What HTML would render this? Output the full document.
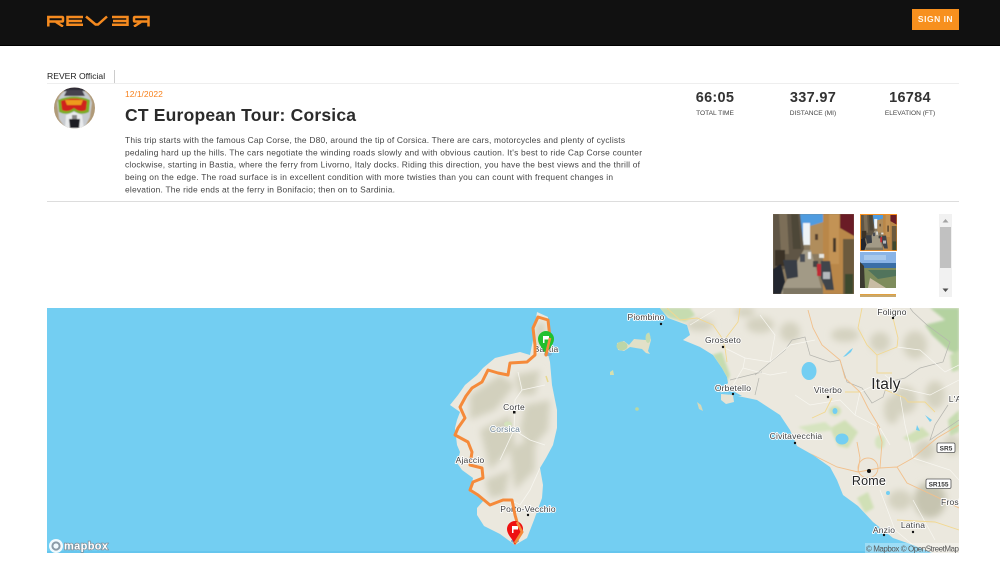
<!DOCTYPE html>
<html lang="en"><head><meta charset="utf-8"><title>CT European Tour: Corsica</title>
<style>
html,body{margin:0;padding:0;background:#fff;width:1000px;height:569px;overflow:hidden}
body{position:relative;font-family:"Liberation Sans",sans-serif;color:#333}
.a{position:absolute}
#hdr{left:0;top:0;width:1000px;height:45px;background:#111;border-bottom:1px solid #000}
#btn{left:912px;top:9px;width:47px;height:21px;background:#f7901e;color:#fff6ea;font-size:8.500px;font-weight:bold;line-height:21px;text-align:center;letter-spacing:.5px}
.num{font-weight:bold;font-size:14.500px;color:#333;text-align:center;width:100px;top:90px;line-height:17px;letter-spacing:.3px}
.lab{font-size:6.600px;color:#444;text-align:center;width:100px;top:109px;line-height:9px}
svg{display:block}
</style></head><body>
<div class="a" id="hdr"></div>
<svg class="a" style="left:47px;top:15px" width="103" height="12" viewBox="0 0 103 12" fill="none" stroke="#f58a1f" stroke-width="2.500">
<path d="M1.300 11.500V2H15Q16 2 16 3V5.500Q16 6.500 15 6.500H1.300M9 7L16 11.500"/>
<path d="M36 2H20.500V9.800H36M21 6H35"/>
<path d="M39 1.500L48.500 9.500H51L60 1.500"/>
<path d="M65 2H80.500V9.800H65M66 6H80"/>
<path d="M101.500 11.500V2H88Q87 2 87 3V5.500Q87 6.500 88 6.500H101.500M94 7L87 11.500"/>
</svg>
<div class="a" id="btn">SIGN IN</div>

<div class="a" style="left:47px;top:71px;font-size:8.600px;line-height:11px;color:#222">REVER Official</div>
<div class="a" style="left:114px;top:70px;width:1px;height:13px;background:#ccc"></div>
<div class="a" style="left:47px;top:83px;width:912px;height:1px;background:#eee"></div>

<svg class="a" style="left:54px;top:87px" width="42" height="42" viewBox="0 0 42 42">
<defs><clipPath id="av"><circle cx="20.500" cy="21" r="20.500"/></clipPath><filter id="b1"><feGaussianBlur stdDeviation=".4"/></filter></defs>
<g clip-path="url(#av)"><rect width="42" height="42" fill="#b09a78"/>
<g filter="url(#b1)"><path d="M10 0H31V6H10z" fill="#2e2c36"/><path d="M3 16Q6 5 12 4L30 4Q36 7 38 16L36 30L30 42H12L5 32z" fill="#c7cbd0"/><path d="M13 3H28L31 9H10z" fill="#45434e"/>
<path d="M4 13Q20 6 36 13L35 25Q27 29 20 24Q13 29 5 25z" fill="#7dad26"/><path d="M7 14Q20 9 33 14L32 23Q26 26 20 21Q14 26 8 23z" fill="#d0231c"/><path d="M11 13H29L27 18H13z" fill="#ee9a1c"/>
<path d="M12 28L20 25L28 28L30 42H11z" fill="#e8eaec"/><path d="M15 32H26L25 41H16z" fill="#1b1b20"/><rect x="18" y="28" width="5" height="4" fill="#888"/></g></g>
</svg>

<div class="a" style="left:125px;top:89px;font-size:8.500px;line-height:11px;color:#f7821e">12/1/2022</div>
<svg class="a" style="left:0;top:100px" width="700" height="30"><text x="125" y="21" font-family="'Liberation Sans',sans-serif" font-size="17.500" font-weight="bold" fill="#2b2b2b" textLength="231" lengthAdjust="spacing">CT European Tour: Corsica</text></svg>

<div class="a num" style="left:665px">66:05</div>
<div class="a num" style="left:763px">337.97</div>
<div class="a num" style="left:860px">16784</div>
<div class="a lab" style="left:665px">TOTAL TIME</div>
<div class="a lab" style="left:763px">DISTANCE (MI)</div>
<div class="a lab" style="left:860px">ELEVATION (FT)</div>

<svg class="a" style="left:0;top:130px" width="700" height="70" font-family="'Liberation Sans',sans-serif" font-size="8.400" fill="#444">
<text x="125" y="13" textLength="500" lengthAdjust="spacing">This trip starts with the famous Cap Corse, the D80, around the tip of Corsica. There are cars, motorcycles and plenty of cyclists</text>
<text x="125" y="25.300" textLength="517" lengthAdjust="spacing">pedaling hard up the hills. The cars negotiate the winding roads slowly and with obvious caution. It's best to ride Cap Corse counter</text>
<text x="125" y="37.600" textLength="515" lengthAdjust="spacing">clockwise, starting in Bastia, where the ferry from Livorno, Italy docks. Riding this direction, you have the best views and the thrill of</text>
<text x="125" y="50" textLength="488" lengthAdjust="spacing">being on the edge. The road surface is in excellent condition with more twisties than you can count with frequent changes in</text>
<text x="125" y="62.300" textLength="270" lengthAdjust="spacing">elevation. The ride ends at the ferry in Bonifacio; then on to Sardinia.</text>
</svg>
<div class="a" style="left:47px;top:201px;width:912px;height:1px;background:#ddd"></div>

<svg class="a" style="left:770px;top:210px" width="190" height="90" viewBox="770 210 190 90">
<defs>
<filter id="b2" x="-5%" y="-5%" width="110%" height="110%"><feGaussianBlur stdDeviation=".6"/></filter>
<clipPath id="c1"><rect x="0" y="0" width="81" height="80"/></clipPath>
<g id="ph"><g clip-path="url(#c1)"><rect width="81" height="80" fill="#8a7a60"/><g filter="url(#b2)">
<rect x="27" width="24" height="30" fill="#4f9ce0"/><rect x="30" y="9" width="7" height="22" fill="#eef3f6"/>
<path d="M0 0H27L31 35L22 50L0 60z" fill="#5f5545"/><path d="M6 0H14L16 40H8z" fill="#7b6e58"/><path d="M18 0H25L28 35H20z" fill="#4e4638"/><rect x="2" y="36" width="10" height="16" fill="#3a3026"/>
<path d="M37 12L50 8V40H37z" fill="#b08d5c"/><rect x="42" y="20" width="3" height="6" fill="#54402e"/>
<path d="M50 0H81V80H50z" fill="#b9874a"/><path d="M56 0H66V50H56z" fill="#c39354"/><rect x="60" y="24" width="3" height="14" fill="#4a3a2a"/><path d="M67 0H81V22L67 14z" fill="#6a1f28"/><path d="M70 25H81V80H70z" fill="#6c5a3e"/><rect x="72" y="60" width="8" height="20" fill="#3e4a2e"/>
<path d="M31 36H38L50 80H6z" fill="#a29a86"/><rect x="10" y="74" width="40" height="6" fill="#7d7664"/>
<path d="M0 55L8 50L12 68L8 80H0z" fill="#22262e"/><path d="M10 46H24L25 63L14 65z" fill="#383c44"/><rect x="27" y="40" width="5" height="8" fill="#4a4e54"/>
<rect x="40" y="47" width="5" height="6" fill="#444"/><rect x="44" y="50" width="5" height="12" fill="#c02c34"/><path d="M48 47H57L61 76H53L48 64z" fill="#40444c"/><rect x="50" y="58" width="7" height="7" fill="#b4b8bc"/><rect x="35" y="38" width="3" height="7" fill="#eee"/><rect x="46" y="40" width="5" height="4" fill="#e6e6e0"/></g></g></g>
<clipPath id="c2"><rect x="0" y="0" width="36" height="36"/></clipPath>
</defs>
<use href="#ph" x="773" y="214"/>
<rect x="860" y="214" width="37" height="37" fill="#f7901e"/>
<g transform="translate(861 215) scale(.44)"><use href="#ph"/></g>
<g transform="translate(860 252)"><g clip-path="url(#c2)"><rect width="36" height="36" fill="#8ab4e6"/><rect y="11" width="36" height="6" fill="#3a6ea6"/><path d="M3 16H36V36H0z" fill="#7e8c5c"/><path d="M8 18H36V24L18 27z" fill="#51745c"/><path d="M0 10L4 14L5 36H0z" fill="#3c3a30"/><path d="M10 26L26 36H8z" fill="#c8bca4"/><rect x="4" y="3" width="22" height="5" fill="#a8c9ec"/></g></g>
<rect x="860" y="294" width="36" height="3" fill="#c8a86c"/><rect x="860" y="294" width="36" height="1" fill="#e0a040"/>
<rect x="939" y="214" width="13" height="83" fill="#f1f1f1"/>
<rect x="940" y="227" width="11" height="41" fill="#c1c1c1"/>
<path d="M942.500 222.500L945.500 219L948.500 222.500z" fill="#a3a3a3"/><path d="M942.500 288.500H948.500L945.500 292z" fill="#505050"/>
</svg>

<svg class="a" style="left:47px;top:308px" width="912" height="245" viewBox="47 308 912 245" font-family="'Liberation Sans',sans-serif">
<defs>
<filter id="h"><feGaussianBlur stdDeviation="3.500"/></filter>
<filter id="s"><feGaussianBlur stdDeviation="1.200"/></filter>
<clipPath id="cl"><path d="M537 312L548 317L549 335L547 350L550 362L552 385L557 410L557 428L553 445L546 458L540 468L543 485L542 498L534 520L527 538L515 545L500 534L484 526L477 515L477 508L484 500L470 492L473 478L462 470L457 463L460 452L457 445L455 428L457 420L460 412L450 405L458 395L465 385L477 375L483 368L495 358L507 355L520 352L530 355L533 340L535 325z"/></clipPath>
<clipPath id="ml"><path d="M660 308L668 318L687 325L690 335L683 340L700 347L713 355L722 368L727 377L728 383L720 392L733 395L757 400L780 415L790 430L797 446L813 455L830 467L837 480L843 495L858 506L873 522L893 538L913 545L932 553H959V308z"/></clipPath>
<g id="pin"><path d="M0 14C-2 8 -8 4 -8 -2A8 8 0 0 1 8 -2C8 4 2 8 0 14z"/><path d="M-3 -5H3V-1.500H-1.500V2H-3z" fill="#fff"/></g>
</defs>
<rect x="47" y="308" width="912" height="245" fill="#73cef2"/>
<rect x="47" y="551" width="912" height="2" fill="#66c6ee"/>

<!-- Corsica -->
<path d="M537 312L548 317L549 335L547 350L550 362L552 385L557 410L557 428L553 445L546 458L540 468L543 485L542 498L534 520L527 538L515 545L500 534L484 526L477 515L477 508L484 500L470 492L473 478L462 470L457 463L460 452L457 445L455 428L457 420L460 412L450 405L458 395L465 385L477 375L483 368L495 358L507 355L520 352L530 355L533 340L535 325z" fill="#ebe8de"/>
<g clip-path="url(#cl)"><g filter="url(#h)" fill="#d2d0bd">
<path d="M470 395L500 375L515 385L495 410L470 420z"/><path d="M515 375L540 370L535 395L520 395z"/><path d="M525 405L550 400L548 430L530 450L520 430z"/><path d="M480 430L510 415L515 445L490 470z"/><path d="M510 450L535 435L535 470L515 490z"/><path d="M485 480L510 470L505 495L490 498z"/><path d="M536 325L545 322L544 345L538 348z"/>
</g>
<path d="M518 372L522 390L515 400L514 430L500 460M514 430L530 440L545 445M522 390L545 385M540 468L530 490L520 505L510 500" fill="none" stroke="#f7f6f0" stroke-width=".8"/></g>
<path d="M546 376L548 382" stroke="#e8d88e" stroke-width="1.500"/>
<ellipse cx="508" cy="424" rx="4" ry="2.500" fill="#d4e2bc"/>
<ellipse cx="515" cy="541" rx="4" ry="2" fill="#7aa6c4"/><ellipse cx="548" cy="354" rx="4" ry="2" fill="#7ab2d4"/>

<!-- islands -->
<path d="M617 343L624 341L629 345L634 339L646 340L649 332L651 340L648 351L650 354L646 353L642 349L630 347L624 351L618 350z" fill="#e2e0c8"/><ellipse cx="622" cy="346" rx="5.500" ry="4.500" fill="#bcd6a8"/><ellipse cx="648" cy="338" rx="2.500" ry="5" fill="#c6dcb0"/>
<path d="M610 372L613 370L614 375H610z" fill="#d6dfae"/><circle cx="637" cy="409" r="1.800" fill="#bcd8a0"/><path d="M697 402L701 405L703 411L699 409z" fill="#d6d8b8"/>
<path d="M721 394L733 395L734 402L726 404L721 400z" fill="#e6e3d4"/>

<!-- mainland -->
<path d="M660 308L668 318L687 325L690 335L683 340L700 347L713 355L722 368L727 377L728 383L720 392L733 395L757 400L780 415L790 430L797 446L813 455L830 467L837 480L843 495L858 506L873 522L893 538L913 545L932 553H959V308z" fill="#ebe8de"/>
<g clip-path="url(#ml)">
<g filter="url(#h)" fill="#d4d2c0">
<ellipse cx="700" cy="325" rx="14" ry="6"/><ellipse cx="760" cy="325" rx="14" ry="8"/><ellipse cx="790" cy="332" rx="10" ry="10"/><ellipse cx="745" cy="312" rx="10" ry="5"/><ellipse cx="845" cy="335" rx="14" ry="7"/>
<ellipse cx="880" cy="342" rx="10" ry="10"/><ellipse cx="915" cy="345" rx="12" ry="14"/><ellipse cx="905" cy="400" rx="12" ry="14"/><ellipse cx="935" cy="395" rx="10" ry="14"/><ellipse cx="892" cy="410" rx="8" ry="14"/>
<ellipse cx="930" cy="500" rx="16" ry="18" fill="#c6c4b0"/><ellipse cx="925" cy="450" rx="10" ry="10"/><ellipse cx="952" cy="445" rx="8" ry="10"/><ellipse cx="900" cy="500" rx="12" ry="10"/>
</g>
<g filter="url(#s)" fill="#c6dcb0">
<path d="M655 308H690L695 315L685 322L670 318z"/><path d="M712 355L722 352L730 375L727 382z"/>
<path d="M930 308H959V355L948 350L932 335L925 325L945 320z" fill="#b4d2a0"/><path d="M950 355L959 350V370L952 372z"/>
<path d="M830 428L845 420L858 432L848 448L838 446z" fill="#d0e0b6"/><ellipse cx="835" cy="411" rx="6" ry="5" fill="#d0e0b6"/><path d="M798 427L825 422L835 430L810 433z" fill="#d6e4c0"/>
<path d="M857 498L868 492L874 508L865 513z" fill="#d0e0b6"/><ellipse cx="880" cy="442" rx="5" ry="7" fill="#d6e4c0"/><path d="M903 438L922 427L930 435L913 443z" fill="#d0e0b6"/><path d="M948 420L959 410V432L950 436z"/>
</g>
<path d="M792 340L805 337L810 355L830 362L840 360L847 382L862 388L872 403L883 397L888 382L905 378L920 368L943 362L950 342L927 325L913 312L910 308M792 340L785 350L755 375M762 372L730 380M759 378L755 395M948 405L935 425L930 440L959 420" fill="none" stroke="#b4b4ae" stroke-width=".7"/>
<g fill="none" stroke="#f8f7f1" stroke-width=".7">
<path d="M725 348L745 358L743 368L733 385M745 358L770 362L790 345L815 340M743 368L770 375L787 372M690 325L715 310M770 362L775 335L760 315M795 395L810 405L840 400L855 415L880 428M855 415L860 392L875 385M885 375L900 388L930 395L959 380M897 347L920 350L945 372L959 365M880 428L890 445M900 395L905 425L913 458M880 490L895 530L913 545M913 458L950 470L959 480M913 500L935 540"/>
</g>
<g fill="none" stroke="#f2d890" stroke-width=".9">
<path d="M667 308L680 320L697 318L713 325L722 338L725 348L727 362M740 308L738 322L722 343M862 308L858 328L867 345L877 355L877 373L892 373M893 318L898 338L897 347L877 355M845 392L860 392M832 398L825 412L812 418M905 398L908 402H925L935 412M873 385L905 398M897 520L935 522L959 530"/>
</g>
<g fill="none" stroke="#f2c08c" stroke-width=".9">
<path d="M808 310L813 328L822 345L840 360L845 378L860 392L868 408L880 428M797 448L813 455L837 467L858 472L880 468L897 467L907 483L937 497L959 508M882 442L880 468M877 425L882 442M913 458L937 438L959 425M897 467L913 458M857 442L860 458L858 472"/>
<circle cx="868" cy="468" r="10"/>
</g>
<g fill="#73cef2"><ellipse cx="809" cy="371" rx="7.500" ry="9"/><path d="M843 357L850 350L853 348L851 352L846 356z"/><ellipse cx="835" cy="411" rx="2.500" ry="3"/><ellipse cx="842" cy="439" rx="6.500" ry="5.500"/><ellipse cx="888" cy="493" rx="2" ry="2"/><path d="M925 415L932 420L930 422zM917 425L920 431L916 430z"/><path d="M722 392L733 391L742 396L724 396z"/></g>
</g>

<g fill="#3c3c3c" font-size="8.500" stroke="#fff" stroke-width="1.800" paint-order="stroke" stroke-linejoin="round" text-anchor="middle" letter-spacing=".2">
<text x="546" y="352">Bastia</text><text x="528" y="512">Porto-Vecchio</text></g>

<!-- route -->
<path d="M546 355L550 338L548 320L538 317L533 328L535 345L535 355L527 362L510 363L508 375L498 373L488 370L482 382L472 388L466 396L460 407L465 418L458 428L455 435L468 442L472 452L470 465L482 468L483 478L473 482L470 490L478 495L490 505L503 500L512 500L515 515L517 522L522 532L515 543" fill="none" stroke="#f58a3a" stroke-width="3" stroke-linejoin="round" stroke-linecap="round"/>
<use href="#pin" x="546" y="341" fill="#22c02e"/>
<path d="M546 355L550 338" stroke="#f58a3a" stroke-width="2.600"/>
<use href="#pin" x="515" y="531" fill="#ee1111"/>
<path d="M517 522L522 532L515 543" fill="none" stroke="#f58a3a" stroke-width="2.600"/>

<!-- labels -->
<g fill="#3c3c3c" font-size="8.500" stroke="#fff" stroke-width="1.800" paint-order="stroke" stroke-linejoin="round" text-anchor="middle" letter-spacing=".2">
<text x="646" y="320">Piombino</text><text x="723" y="343">Grosseto</text><text x="733" y="391">Orbetello</text><text x="828" y="393">Viterbo</text><text x="892" y="315">Foligno</text><text x="796" y="439">Civitavecchia</text><text x="884" y="533">Anzio</text><text x="913" y="528">Latina</text><text x="951" y="505">Frosi</text><text x="955" y="402">L'A</text><text x="514" y="410">Corte</text><text x="470" y="463">Ajaccio</text>
<text x="505" y="432" fill="#6a8090">Corsica</text>
<text x="886" y="389" font-size="15.500" fill="#222">Italy</text>
<text x="869" y="485" font-size="12.500" fill="#222">Rome</text>
</g>
<g fill="#111"><circle cx="661" cy="324" r="1.200"/><circle cx="723" cy="347" r="1.200"/><circle cx="733" cy="394" r="1.200"/><circle cx="828" cy="397" r="1.200"/><circle cx="893" cy="318" r="1.200"/><circle cx="795" cy="443" r="1.200"/><circle cx="869" cy="471" r="2"/><circle cx="884" cy="535" r="1.200"/><circle cx="913" cy="532" r="1.200"/><rect x="513" y="411" width="2.500" height="2.500"/><circle cx="528" cy="515" r="1.200"/></g>
<g font-size="6.500" font-weight="bold" fill="#333" text-anchor="middle">
<rect x="937" y="443" width="18" height="9.500" rx="1.500" fill="#fff" stroke="#555" stroke-width=".8"/><text x="946" y="450.500">SR5</text>
<rect x="926" y="479" width="25" height="9.500" rx="1.500" fill="#fff" stroke="#555" stroke-width=".8"/><text x="938.500" y="486.500">SR155</text></g>

<!-- attribution -->
<circle cx="56" cy="546" r="7" fill="#fff" opacity=".9"/><circle cx="56" cy="546" r="3.600" fill="none" stroke="#8a9aa6" stroke-width="2"/>
<text x="64" y="549.500" font-size="11" font-weight="bold" fill="#fff" stroke="#7c8c98" stroke-width="1.400" paint-order="stroke" textLength="44" lengthAdjust="spacing">mapbox</text>
<rect x="865" y="543" width="94" height="10" fill="#fff" opacity=".3"/>
<text x="866" y="551.500" font-size="8" fill="#555" textLength="93" lengthAdjust="spacing">© Mapbox © OpenStreetMap</text>
</svg>
</body></html>
